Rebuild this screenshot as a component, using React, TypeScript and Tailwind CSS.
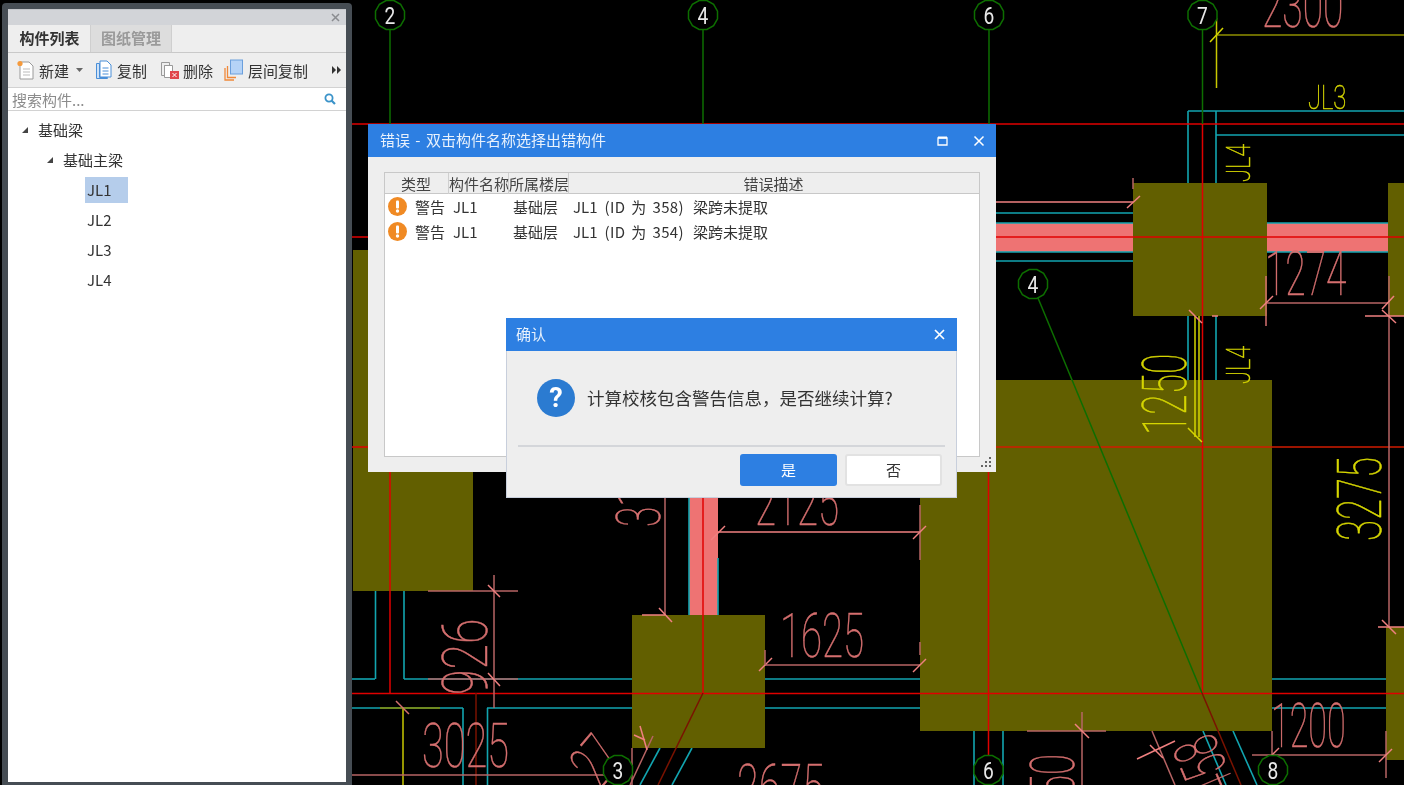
import React from "react";

const CJK = { fontFamily: '"Noto Sans CJK SC","Noto Sans",sans-serif' };
const P = "#d56f6f";
const PD = "#b76464";
const PB = "#f08080";
const Y = "#d6d600";
const C = "#12a5b0";
const R = "#e00000";
const G = "#0d6e00";

type L = [number, number, number, number, string, number?];
const lines: L[] = [
  // red axes
  [352, 124, 1404, 124, R], [352, 237, 368, 237, R], [996, 237, 1404, 237, R], [352, 447, 368, 447, R], [996, 447, 1404, 447, "#d11b00"],
  [352, 693.5, 1404, 693.5, R], [390, 472, 390, 693, R], [703, 497, 703, 693, R], [988.5, 472, 988.5, 760, R], [1202.5, 124, 1202.5, 693, R],
  // green axes
  [390, 30, 390, 124, G], [703, 30, 703, 124, G], [989, 30, 989, 124, G], [1202.5, 30, 1202.5, 124, G], [1038, 298, 1202, 693, G, 1.5],
  // dark red diagonals
  [703, 693, 658, 785, "#7a1200", 1.5], [1202, 693, 1241, 785, "#7a1200", 1.5], [476, 693, 476, 785, "#7a1200"],
  // cyan
  [1188, 111, 1404, 111, C], [1216, 135, 1404, 135, C], [1188, 111, 1188, 183, C], [1216, 111, 1216, 183, C], [1188, 316, 1188, 445, C], [1216, 316, 1216, 435, C],
  [996, 213, 1133, 213, C], [996, 261, 1133, 261, C], [996, 223, 1133, 223, C], [996, 252, 1133, 252, C], [1267, 223, 1388, 223, C], [1267, 252, 1388, 252, C],
  [375.5, 591, 375.5, 679, C], [404, 591, 404, 679, C], [352, 679, 375, 679, C], [404, 679, 632, 679, C], [765, 679, 920, 679, C], [1272, 679, 1386, 679, C],
  [352, 708, 463, 708, C], [463, 708, 463, 785, C], [487.5, 708, 487.5, 785, C], [487, 708, 632, 708, C], [765, 708, 920, 708, C], [1272, 708, 1386, 708, C],
  [660, 748, 640, 785, C], [692, 748, 672, 785, C], [974, 731, 974, 785, C], [1003, 731, 1003, 785, C], [1203, 731, 1226, 785, C], [1233, 731, 1257, 785, C],
  [689, 497, 689, 615, C], [718, 558, 718, 615, C],
  // yellow
  [1216.5, 18, 1216.5, 88, "#c8c800"], [1216, 35, 1404, 35, "#8f8f00"], [1210, 42, 1223, 28, Y], [1195, 316, 1195, 437, Y], [1199, 316, 1199, 437, Y], [1188, 428, 1202, 442, Y],
  [403, 708, 403, 785, "#c8c800"], [380, 708, 440, 708, "#8f8f00"], [396, 701, 409, 714, P],
  // dimensions
  [1267, 303, 1388, 303, PD], [1266, 276, 1266, 326, P], [1389, 276, 1389, 627, PD], [1260, 309, 1273, 296, PB], [1382, 309, 1394, 296, PB], [1365, 316, 1404, 316, PB], [1382, 310, 1396, 323, PB],
  [996, 202, 1133, 202, PB], [1127, 208, 1140, 196, PB], [1133, 178, 1133, 189, PD],
  [1189, 310, 1202, 323, PB], [1212, 316, 1218, 316, PB],
  [1378, 627, 1404, 627, PB], [1382, 620, 1396, 634, PB],
  [718, 532, 920, 532, PB], [711, 540, 725, 526, PB], [920, 505, 920, 560, PD], [913, 539, 926, 526, PB],
  [665, 497, 665, 615, PD], [642, 615, 665, 615, PB], [659, 608, 672, 622, PB],
  [765, 665, 920, 665, PD], [759, 671, 772, 658, PB], [765, 650, 765, 665, PD], [913, 672, 926, 659, PB], [920, 642, 920, 655, PD],
  [428, 591, 518, 591, PD], [428, 679, 518, 679, PD], [494, 575, 494, 708, PD], [488, 585, 500, 597, PB], [488, 673, 500, 686, PB],
  [352, 775, 610, 775, PD], [632, 748, 632, 785, PD],
  [1252, 755, 1386, 755, PD], [1272, 731, 1272, 760, PD], [1265, 762, 1279, 748, PB], [1386, 731, 1386, 778, PD], [1379, 762, 1392, 749, PB],
  [1027, 731, 1106, 731, PD], [1082, 712, 1082, 785, PD], [1075, 724, 1089, 738, PB],
  [1152, 731, 1175, 785, PD], [1137, 759, 1175, 741, PB], [1150, 745, 1163, 758, PB],
  [634, 735, 645, 740, PB], [653, 736, 630, 785, PD], [640, 726, 647, 750, PB],
];

function Ax({ x, y, n }: { x: number; y: number; n: string }) {
  const pts = Array.from({ length: 12 }, (_, i) => {
    const a = (Math.PI / 6) * i + Math.PI / 12;
    return `${(x + 15 * Math.cos(a)).toFixed(1)},${(y + 15 * Math.sin(a)).toFixed(1)}`;
  }).join(" ");
  return (
    <g>
      <polygon points={pts} fill="#000" stroke={G} strokeWidth={1.5} />
      <text x={x} y={y + 9} textAnchor="middle" fontSize={24} fill="#e8e8e8" fontFamily="Roboto, sans-serif" transform={`translate(${x} 0) scale(.8 1) translate(${-x} 0)`}>{n}</text>
    </g>
  );
}

function T({ x, y, t, s, k, r = 0, c = P }: { x: number; y: number; t: string; s: number; k: number; r?: number; c?: string }) {
  return (
    <text transform={`translate(${x} ${y}) rotate(${r}) scale(${k} 1)`} fontSize={s} fill={c} stroke={c} strokeWidth={0.5} fontWeight={100} fontFamily="Roboto, Inter, sans-serif">{t}</text>
  );
}

function Cad() {
  return (
    <svg viewBox="352 0 1052 785" className="block h-[785px] w-[1052px] shrink-0">
      <rect x={352} y={0} width={1052} height={785} fill="#000" />
      <g fill="#ee7373">
        <rect x={996} y={223} width={137} height={29} />
        <rect x={1267} y={223} width={121} height={29} />
        <rect x={689} y={497} width={29} height={118} />
      </g>
      {lines.filter((l) => l[4] === C).map((l, i) => (
        <line key={i} x1={l[0]} y1={l[1]} x2={l[2]} y2={l[3]} stroke={l[4]} strokeWidth={l[5] ?? 1.6} />
      ))}
      <g fill="#625f00">
        <rect x={353} y={250} width={120} height={341} />
        <rect x={1133} y={183} width={134} height={133} />
        <rect x={1388} y={183} width={16} height={133} />
        <rect x={920} y={380} width={352} height={351} />
        <rect x={632} y={615} width={133} height={133} />
        <rect x={1386} y={627} width={18} height={133} />
      </g>
      {lines.filter((l) => l[4] !== C).map((l, i) => (
        <line key={i} x1={l[0]} y1={l[1]} x2={l[2]} y2={l[3]} stroke={l[4]} strokeWidth={l[5] ?? 1.5} />
      ))}
      <T x={1262} y={27} t="2300" s={62} k={0.6} />
      <T x={1265} y={295} t="1274" s={62} k={0.6} />
      <T x={755} y={525} t="2125" s={62} k={0.62} />
      <T x={780} y={657} t="1625" s={62} k={0.62} />
      <T x={422} y={767} t="3025" s={62} k={0.64} />
      <T x={1271} y={747} t="1200" s={62} k={0.55} />
      <T x={737} y={808} t="2675" s={62} k={0.64} />
      <T x={487} y={695} t="926" s={62} k={0.75} r={-90} />
      <T x={660} y={527} t="31" s={62} k={0.6} r={-90} />
      <T x={1074} y={796} t="50" s={62} k={0.62} r={-90} />
      <T x={1236} y={787} t="458" s={62} k={0.6} r={-113} />
      <T x={600} y={790} t="27" s={62} k={0.6} r={-50} />
      <T x={1308} y={109} t="JL3" s={34} k={0.7} c={Y} />
      <T x={1250} y={182} t="JL4" s={34} k={0.7} r={-90} c={Y} />
      <T x={1250} y={384} t="JL4" s={34} k={0.7} r={-90} c={Y} />
      <T x={1186} y={435} t="1250" s={62} k={0.6} r={-90} c={Y} />
      <T x={1381} y={541} t="3275" s={62} k={0.62} r={-90} c={Y} />
      <Ax x={390} y={15} n="2" />
      <Ax x={703} y={15} n="4" />
      <Ax x={989} y={15} n="6" />
      <Ax x={1202.5} y={15} n="7" />
      <Ax x={1033} y={284} n="4" />
      <Ax x={618} y={770} n="3" />
      <Ax x={988.5} y={770} n="6" />
      <Ax x={1273} y={770} n="8" />
    </svg>
  );
}

function Tool({ icon, label, w, gap }: { icon: React.ReactNode; label: string; w: string; gap: string }) {
  return (
    <div className={`flex items-center ${gap} ${w}`}>
      {icon}
      <span className="text-[15px] leading-none text-[#333]">{label}</span>
    </div>
  );
}

const NewIcon = (
  <svg width="20" height="22" viewBox="0 0 20 22">
    <path d="M4 3h9l4 4v13H4z" fill="#fff" stroke="#9a9a9a" />
    <path d="M7 10h7M7 13h7M7 16h7" stroke="#bbb" />
    <circle cx="4" cy="4.500" r="2.600" fill="#f59a3c" />
  </svg>
);
const CopyIcon = (
  <svg width="18" height="20" viewBox="0 0 18 20">
    <path d="M1.500 3.500h3v14h8v1h-11z" fill="#cfe2f7" stroke="#4a8fd8" />
    <path d="M5 1h7l4 4v12H5z" fill="#fff" stroke="#4a8fd8" />
    <path d="M7.500 8h6M7.500 11h6M7.500 14h6" stroke="#4a8fd8" />
  </svg>
);
const DelIcon = (
  <svg width="20" height="20" viewBox="0 0 20 20">
    <path d="M1.500 2.500h8v3h-5v10h-3z" fill="#eee" stroke="#999" />
    <path d="M4.500 5.500h8v12h-8z" fill="#fff" stroke="#999" />
    <rect x="10" y="11" width="9" height="8" fill="#e0474c" />
    <path d="M12.500 13l4 4m0-4l-4 4" stroke="#fff" />
  </svg>
);
const LayerIcon = (
  <svg width="20" height="22" viewBox="0 0 20 22">
    <path d="M1 9v12h9M3.500 7v11.500H12" fill="none" stroke="#f0893a" strokeWidth="1.300" />
    <rect x="6.500" y="1" width="12" height="14" fill="#b5d3f7" stroke="#6b9fdc" />
  </svg>
);

function Panel() {
  return (
    <div className="ml-[2px] mt-[3px] h-[782px] w-[350px] shrink-0 rounded-t-[4px] bg-[#464d54] px-[6px] pt-[6px] pb-[3px]">
      <div className="flex h-full flex-col bg-white">
        <div className="flex h-[16px] items-center justify-end border-t border-[#c4c6ca] bg-[#d2d4d8] pr-[6px]">
          <svg width="9" height="9" viewBox="0 0 9 9"><path d="M1 1l7 7m0-7l-7 7" stroke="#8a8c90" strokeWidth="1.500" /></svg>
        </div>
        <div className="flex h-[28px] border-b border-[#c9c9c9] bg-[#eeeeee]">
          <div className="ml-[1px] flex w-[81px] items-center justify-center text-[15px] font-bold text-[#333]">构件列表</div>
          <div className="flex w-[82px] items-center justify-center border-x border-[#cfcfcf] bg-[#dddddd] text-[15px] font-bold text-[#9a9a9a]">图纸管理</div>
        </div>
        <div className="flex h-[35px] items-center border-b border-[#d2d2d2] bg-[#eeeeee] pl-[8px]">
          <div className="flex w-[79px] items-center gap-[3px]">
            {NewIcon}
            <span className="text-[15px] leading-none text-[#333]">新建</span>
            <svg width="7" height="4" viewBox="0 0 7 4" className="ml-[4px]"><path d="M0 0h7L3.500 4z" fill="#666" /></svg>
          </div>
          <Tool icon={CopyIcon} label="复制" w="w-[65px]" gap="gap-[4px]" />
          <Tool icon={DelIcon} label="删除" w="w-[64px]" gap="gap-[3px]" />
          <Tool icon={LayerIcon} label="层间复制" w="w-[108px]" gap="gap-[4px]" />
          <svg width="9" height="8" viewBox="0 0 9 8"><path d="M0 0l4 4-4 4zM5 0l4 4-4 4z" fill="#333" /></svg>
        </div>
        <div className="flex h-[23px] items-center justify-between border-b border-[#d2d2d2] bg-white pl-[4px] pr-[10px]">
          <span className="text-[15px] leading-none text-[#8c8c8c]">搜索构件...</span>
          <svg width="12" height="12" viewBox="0 0 12 12"><circle cx="5" cy="5" r="3.600" fill="none" stroke="#3b93c9" strokeWidth="1.800" /><path d="M7.500 7.500L11 11" stroke="#3b93c9" strokeWidth="2.200" /></svg>
        </div>
        <div className="flex flex-1 flex-col bg-white pt-[4px] text-[15px] leading-[30px] text-[#333]">
          <div className="flex h-[30px] items-center pl-[13px]">
            <svg width="8" height="8" viewBox="0 0 8 8"><path d="M7 1v6H1z" fill="#444" /></svg>
            <span className="ml-[9px]">基础梁</span>
          </div>
          <div className="flex h-[30px] items-center pl-[38px]">
            <svg width="8" height="8" viewBox="0 0 8 8"><path d="M7 1v6H1z" fill="#444" /></svg>
            <span className="ml-[9px]">基础主梁</span>
          </div>
          <div className="ml-[77px] mt-[2px] flex h-[26px] w-[43px] items-center bg-[#b5cdeb] pl-[2px]">JL1</div>
          <div className="ml-[79px] mt-[2px] h-[30px]">JL2</div>
          <div className="ml-[79px] h-[30px]">JL3</div>
          <div className="ml-[79px] h-[30px]">JL4</div>
        </div>
      </div>
    </div>
  );
}

function ErrRow({ id }: { id: string }) {
  return (
    <div className="grid h-[25px] grid-cols-[65px_60px_60px_1fr] items-center text-[15px] leading-none text-[#333]">
      <div className="flex items-center pl-[3px]">
        <svg width="19" height="19" viewBox="0 0 19 19" className="shrink-0">
          <circle cx="9.500" cy="9.500" r="9.500" fill="#f08a24" />
          <rect x="8" y="3.500" width="3" height="8" rx="1" fill="#fff" />
          <circle cx="9.500" cy="14" r="1.700" fill="#fff" />
        </svg>
        <span className="ml-[8px] whitespace-nowrap">警告</span>
      </div>
      <div className="pl-[3px]">JL1</div>
      <div className="pl-[3px] whitespace-nowrap">基础层</div>
      <div className="flex whitespace-pre pl-[3px]">
        <span>JL1</span>
        <span className="ml-[7px] tracking-[0.4px] [word-spacing:2px]">{`(ID 为 ${id})`}</span>
        <span className="ml-[9px]">梁跨未提取</span>
      </div>
    </div>
  );
}

function ErrorDialog() {
  return (
    <div className="absolute left-[368px] top-[124px] flex h-[348px] w-[628px] flex-col bg-[#eeeeee]">
      <div className="flex h-[33px] items-center justify-between bg-[#2d7fe2] pl-[12px] pr-[11px] text-[15px] text-[#e8f1fc]">
        <span className="[word-spacing:2px]">错误 - 双击构件名称选择出错构件</span>
        <div className="flex items-center gap-[25px]">
          <svg width="11" height="10" viewBox="0 0 11 10"><path d="M1 2h9v7H1z" fill="none" stroke="#fff" strokeWidth="1.300" /><path d="M1 1.500h9" stroke="#fff" strokeWidth="2" /></svg>
          <svg width="12" height="12" viewBox="0 0 12 12"><path d="M1.500 1.500l9 9m0-9l-9 9" stroke="#fff" strokeWidth="1.500" /></svg>
        </div>
      </div>
      <div className="relative flex-1 px-[16px] pb-[15px] pt-[15px]">
        <div className="h-full border border-[#c8c8c8] bg-white">
          <div className="grid h-[21px] grid-cols-[65px_60px_60px_1fr] border-b border-[#c8c8c8] bg-[#eeeeee] text-center text-[15px] leading-[21px] text-[#444]">
            <div className="-translate-x-px border-r border-[#cfcfcf]">类型</div>
            <div className="-translate-x-px whitespace-nowrap border-r border-[#cfcfcf]">构件名称</div>
            <div className="-translate-x-px whitespace-nowrap border-r border-[#cfcfcf]">所属楼层</div>
            <div className="-translate-x-px">错误描述</div>
          </div>
          <ErrRow id="358" />
          <ErrRow id="354" />
        </div>
        <svg width="11" height="11" viewBox="0 0 11 11" className="absolute bottom-[4px] right-[4px]">
          <g fill="#666">
            <rect x="8" y="0" width="2" height="2" /><rect x="4" y="4" width="2" height="2" /><rect x="8" y="4" width="2" height="2" />
            <rect x="0" y="8" width="2" height="2" /><rect x="4" y="8" width="2" height="2" /><rect x="8" y="8" width="2" height="2" />
          </g>
        </svg>
      </div>
    </div>
  );
}

function ConfirmDialog() {
  return (
    <div className="absolute left-[506px] top-[318px] flex h-[180px] w-[451px] flex-col border-x border-b border-[#c8cfdc] bg-[#eeeeee]">
      <div className="-mx-px flex h-[33px] items-center justify-between bg-[#2d7fe2] pl-[10px] pr-[12px] text-[15px] text-[#e8f1fc]">
        <span>确认</span>
        <svg width="11" height="11" viewBox="0 0 11 11"><path d="M1 1l9 9m0-9l-9 9" stroke="#fff" strokeWidth="1.700" /></svg>
      </div>
      <div className="flex h-[94px] items-center pl-[30px] pb-[1px]">
        <svg width="38" height="38" viewBox="0 0 38 38" className="shrink-0">
          <circle cx="19" cy="19" r="19" fill="#2b7bd1" />
          <text x="19" y="28" textAnchor="middle" fontSize="27" fontWeight="700" fill="#fff" fontFamily="Roboto, sans-serif">?</text>
        </svg>
        <span className="ml-[12px] whitespace-nowrap text-[17.500px] leading-none text-[#333]">计算校核包含警告信息，是否继续计算?</span>
      </div>
      <div className="mx-[11px] h-[2px] bg-[#d4d6da]" />
      <div className="flex justify-end gap-[8px] pr-[14px] pt-[7px]">
        <div className="flex h-[32px] w-[97px] items-center justify-center rounded-[3px] bg-[#2d7fe2] text-[15px] text-white">是</div>
        <div className="flex h-[32px] w-[97px] items-center justify-center rounded-[3px] border-2 border-[#e2e2e2] bg-white text-[15px] text-[#333]">否</div>
      </div>
    </div>
  );
}

export default function App() {
  return (
    <div style={CJK} className="relative flex h-[785px] w-[1404px] overflow-hidden bg-black blur-[0.4px]">
      <Panel />
      <Cad />
      <ErrorDialog />
      <ConfirmDialog />
    </div>
  );
}
